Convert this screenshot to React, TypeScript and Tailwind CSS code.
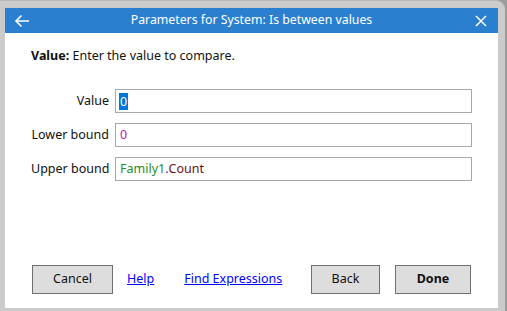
import React from "react";

export default function App() {
  const font = { fontFamily: '"Noto Sans", "Open Sans", sans-serif' };
  return (
    <div className="w-[507px] h-[311px] bg-[#9c9c9c] flex overflow-hidden" style={font}>
      <div className="w-[505px] h-[311px] bg-[#cbcbcb] rounded-tr-[9px] border-t border-[#b8b8b8] pt-[7px] pl-[5px] pr-[7px] pb-[3px] flex flex-col">
        <div className="flex-1 bg-white flex flex-col">
          <div className="h-[25px] bg-[#2b7fcf] flex items-center text-white">
            <div className="w-[34px] flex justify-center">
              <svg width="16" height="14" viewBox="0 0 16 14" fill="none" stroke="white" strokeWidth="1.6">
                <path d="M15 7H2M7.5 1.5L2 7l5.5 5.5" />
              </svg>
            </div>
            <div className="flex-1 text-center text-[12.3px] leading-none">Parameters for System: Is between values</div>
            <div className="w-[34px] flex justify-center">
              <svg width="12" height="12" viewBox="0 0 12 12" stroke="white" strokeWidth="1.5">
                <path d="M1 1l10 10M11 1L1 11" />
              </svg>
            </div>
          </div>
          <div className="flex-1 flex flex-col px-[26px] pt-[15px] pb-[14px] text-[12.5px]">
            <div className="text-[#111] leading-[16px]">
              <span className="font-bold">Value:</span> Enter the value to compare.
            </div>
            <div className="mt-[25px] grid grid-cols-[78px_1fr] gap-x-[6px] gap-y-[10px] items-center">
              <div className="text-right text-[#111] whitespace-nowrap">Value</div>
              <div className="h-[24px] border border-[#a8a8a8] flex items-center px-[3px]">
                <span className="bg-[#0078d7] text-white px-[1px] leading-[17px]">0</span>
              </div>
              <div className="text-right text-[#111] whitespace-nowrap">Lower bound</div>
              <div className="h-[24px] border border-[#a8a8a8] flex items-center px-[4px]">
                <span className="text-[#b020a8]">0</span>
              </div>
              <div className="text-right text-[#111] whitespace-nowrap">Upper bound</div>
              <div className="h-[24px] border border-[#a8a8a8] flex items-center px-[4px]">
                <span className="text-[#2a8a1e]">Family1</span>
                <span className="text-[#3030c0]">.</span>
                <span className="text-[#6a1010]">Count</span>
              </div>
            </div>
            <div className="flex-1" />
            <div className="flex items-center pl-[1px] pr-[1px]">
              <button className="w-[81px] h-[29px] bg-[#dddddd] border border-[#707070] text-[#111]">Cancel</button>
              <a className="ml-[14px] text-[#0000ff] underline">Help</a>
              <a className="ml-[30px] text-[#0000ff] underline">Find Expressions</a>
              <div className="flex-1" />
              <button className="w-[69px] h-[29px] bg-[#dddddd] border border-[#707070] text-[#111]">Back</button>
              <button className="ml-[15px] w-[76px] h-[29px] bg-[#dddddd] border border-[#707070] text-[#111] font-bold">Done</button>
            </div>
          </div>
        </div>
      </div>
    </div>
  );
}
